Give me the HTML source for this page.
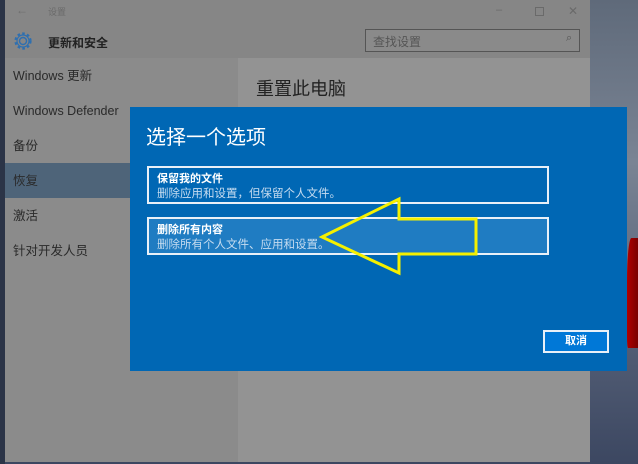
<!DOCTYPE html>
<html><head><meta charset="utf-8"><style>
*{margin:0;padding:0;box-sizing:border-box}
body{width:638px;height:464px;overflow:hidden;position:relative;font-family:"Liberation Sans","Noto Sans CJK SC",sans-serif;background:linear-gradient(180deg,#5f6a7a 0%,#7a8494 35%,#566178 70%,#3c4761 100%)}
.abs{position:absolute}
.t{color:#2a2a2a;font-size:12.5px;line-height:14px}
</style></head><body>
<div class="abs" style="left:0;top:0;width:5px;height:464px;background:#2b3447"></div>
<div class="abs" style="left:5px;top:0;width:585px;height:462px;background:#939393"></div>
<div class="abs" style="left:5px;top:0;width:585px;height:58px;background:#868686"></div>
<div class="abs" style="left:5px;top:58px;width:233px;height:404px;background:#8b8b8b"></div>
<div class="abs" style="left:5px;top:163px;width:233px;height:35px;background:#4e6479"></div>
<div class="abs" style="left:16px;top:3px;color:#6e6e6e;font-size:12px">←</div>
<div class="abs" style="left:48px;top:5px;color:#6a6a6a;font-size:9px">设置</div>
<div class="abs" style="left:496px;top:4px;color:#6a6a6a;font-size:11px">–</div>
<div class="abs" style="left:535px;top:7px;width:9px;height:9px;border:1px solid #6a6a6a"></div>
<div class="abs" style="left:568px;top:4px;color:#6a6a6a;font-size:12px">✕</div>
<svg class="abs" style="left:12px;top:30px" width="22" height="22" viewBox="0 0 22 22"><circle cx="11" cy="11" r="3.5" fill="none" stroke="#2e6fb0" stroke-width="1.4"/><circle cx="11" cy="11" r="7.5" fill="none" stroke="#2e6fb0" stroke-width="2.2" stroke-dasharray="2.6 2.3"/><circle cx="11" cy="11" r="6" fill="none" stroke="#2e6fb0" stroke-width="1.2"/></svg>
<div class="abs" style="left:48px;top:34px;font-size:12px;font-weight:bold;color:#222">更新和安全</div>
<div class="abs" style="left:365px;top:29px;width:215px;height:23px;border:1.5px solid #555;background:#8a8a8a"></div>
<div class="abs" style="left:373px;top:33px;font-size:12px;color:#555">查找设置</div>
<div class="abs" style="left:566px;top:32px;font-size:11px;color:#555">⌕</div>
<div class="abs t" style="left:13px;top:69px">Windows 更新</div>
<div class="abs t" style="left:13px;top:104px">Windows Defender</div>
<div class="abs t" style="left:13px;top:139px">备份</div>
<div class="abs t" style="left:13px;top:174px">恢复</div>
<div class="abs t" style="left:13px;top:209px">激活</div>
<div class="abs t" style="left:13px;top:244px">针对开发人员</div>
<div class="abs" style="left:256px;top:75px;font-size:18px;color:#222">重置此电脑</div>
<div class="abs" style="left:627px;top:238px;width:11px;height:110px;background:linear-gradient(90deg,#b00000,#7a0000);border-radius:40% 0 0 10%"></div>
<div class="abs" style="left:130px;top:107px;width:497px;height:264px;background:#0067b4"></div>
<div class="abs" style="left:146px;top:121px;font-size:20px;color:#fff">选择一个选项</div>
<div class="abs" style="left:147px;top:166px;width:402px;height:38px;border:2px solid #e8f0f8"></div>
<div class="abs" style="left:157px;top:170px;font-size:11px;font-weight:bold;color:#fff">保留我的文件</div>
<div class="abs" style="left:157px;top:185px;font-size:11.5px;color:#c6dcf0">删除应用和设置，但保留个人文件。</div>
<div class="abs" style="left:147px;top:217px;width:402px;height:38px;border:2px solid #e8f0f8;background:#1f7cc2"></div>
<div class="abs" style="left:157px;top:221px;font-size:11px;font-weight:bold;color:#fff">删除所有内容</div>
<div class="abs" style="left:157px;top:236px;font-size:11.5px;color:#c6dcf0">删除所有个人文件、应用和设置。</div>
<svg class="abs" style="left:0;top:0" width="638" height="464"><polygon points="322,237 399,199 399,219 476,219 476,254 399,254 399,273" fill="none" stroke="#f5f000" stroke-width="3"/></svg>
<div class="abs" style="left:543px;top:330px;width:66px;height:23px;border:2px solid #e8f0f8;background:#0078d7;color:#fff;font-size:11px;font-weight:bold;text-align:center;line-height:19px">取消</div>
</body></html>
